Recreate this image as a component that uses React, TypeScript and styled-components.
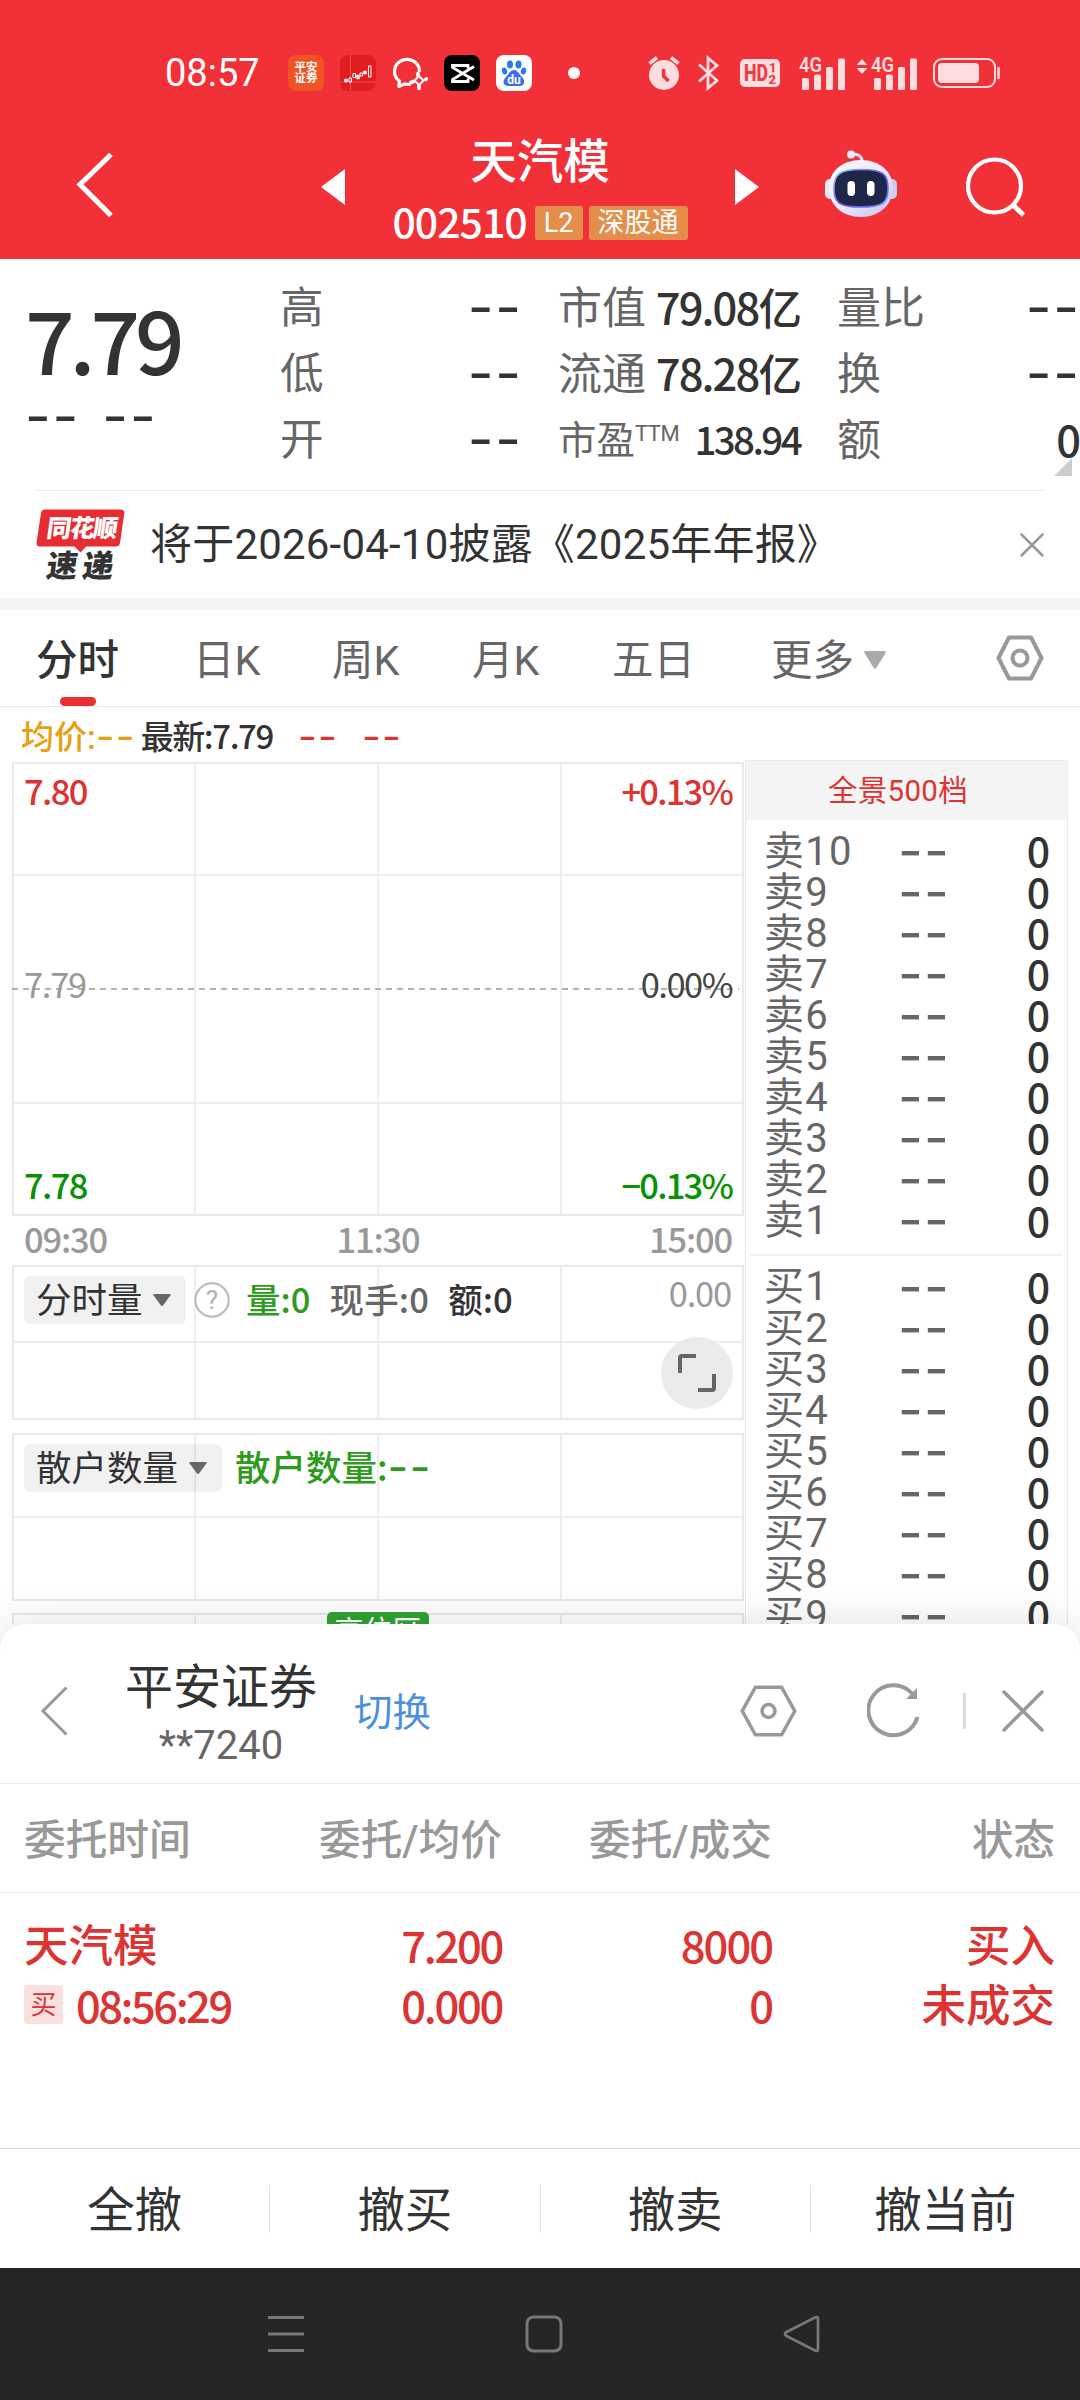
import React from "react";
import styled, { createGlobalStyle, css } from "styled-components";

const Global = createGlobalStyle`
  * { box-sizing: border-box; }
  html, body { margin: 0; padding: 0; background: #fff; }
  body { font-family: Roboto, "Noto Sans CJK SC", sans-serif; color: #333; }
  svg { display: block; flex: none; }
`;

const RED = "#dc3333";
const GREEN = "#0a9206";
const LINE = "#ebebeb";

/* ---------- shared text ---------- */

const Txt = styled.span<{ $size: number; $color?: string; $weight?: number; $ls?: number; $w?: number }>`
  font-size: ${(p) => p.$size}px;
  line-height: 1;
  color: ${(p) => p.$color ?? "inherit"};
  font-weight: ${(p) => p.$weight ?? 400};
  letter-spacing: ${(p) => p.$ls ?? 0}px;
  white-space: nowrap;
  ${(p) => p.$w && css`width: ${p.$w}px;`}
`;

/* narrow figures for prices, volumes and times */
const Num = styled(Txt)`
  font-family: "Noto Sans CJK SC", sans-serif;
  padding-bottom: 0.12em;
`;

const Dash = styled.span<{ $size: number; $ls: number; $color?: string; $weight?: number }>`
  font-family: Inter, sans-serif;
  font-size: ${(p) => p.$size}px;
  letter-spacing: ${(p) => p.$ls}px;
  margin-right: -${(p) => p.$ls}px;
  padding-bottom: 2px;
  color: ${(p) => p.$color ?? "#333"};
  font-weight: ${(p) => p.$weight ?? 400};
  line-height: 0.74;
  white-space: nowrap;
`;

/* ---------- page ---------- */

const Screen = styled.div`
  width: 1080px;
  height: 2400px;
  display: flex;
  flex-direction: column;
  overflow: hidden;
  background: #fff;
`;

const Header = styled.header`
  height: 259px;
  flex: none;
  background: #f23038;
  color: #fff;
  display: flex;
  flex-direction: column;
`;

const StatusBar = styled.div`
  height: 126px;
  padding: 19px 77px 0 165px;
  display: flex;
  align-items: center;
`;

const Clock = styled(Txt)`
  width: 123px;
  flex: none;
`;

const AppIcons = styled.div`
  display: flex;
  align-items: center;
  gap: 16px;
  width: 361px;
  flex: none;
`;

const AppTile = styled.div<{ $bg: string }>`
  width: 36px;
  height: 36px;
  border-radius: 8px;
  background: ${(p) => p.$bg};
  display: flex;
  flex-direction: column;
  align-items: center;
  justify-content: center;
  overflow: hidden;
  font-size: 11.5px;
  line-height: 11px;
  font-weight: 700;
`;

const Indicators = styled.div`
  display: flex;
  align-items: center;
  margin-left: -1px;
`;

const Gap = styled.i<{ $w: number }>`
  width: ${(p) => p.$w}px;
  flex: none;
`;

const TitleBar = styled.div`
  height: 133px;
  padding-left: 75px;
  display: flex;
`;

const BarIcon = styled.div<{ $w: number; $top: number; $ml?: number }>`
  width: ${(p) => p.$w}px;
  padding-top: ${(p) => p.$top}px;
  margin-left: ${(p) => p.$ml ?? 0}px;
  flex: none;
`;

const TitleBlock = styled.div`
  width: 390px;
  display: flex;
  flex-direction: column;
  align-items: center;
`;

const TitleName = styled(Txt)`
  line-height: 60px;
  margin-top: 6px;
`;

const CodeRow = styled.div`
  display: flex;
  align-items: center;
  height: 34px;
  margin-top: 14px;
`;

const Badge = styled.span<{ $w: number }>`
  width: ${(p) => p.$w}px;
  height: 34px;
  line-height: 35px;
  border-radius: 3px;
  background: #e58d4b;
  font-size: 27px;
  text-align: center;
  margin-left: 6px;
  white-space: nowrap;
`;

/* ---------- quote ---------- */

const Quote = styled.section`
  height: 231px;
  flex: none;
  padding-top: 17px;
  display: flex;
`;

const PriceCol = styled.div`
  width: 280px;
  padding-left: 25px;
  flex: none;
`;

const BigPrice = styled.div`
  font-family: "Noto Sans CJK SC", sans-serif;
  font-size: 87px;
  line-height: 104px;
  margin-top: 9px;
  height: 110px;
  font-weight: 500;
  letter-spacing: -5px;
`;

const ChangeRow = styled.div`
  display: flex;
  gap: 24px;
  height: 45px;
  align-items: center;
`;

const StatCol = styled.div<{ $w: number; $ml: number }>`
  width: ${(p) => p.$w}px;
  margin-left: ${(p) => p.$ml}px;
  flex: none;
`;

const StatRow = styled.div`
  height: 66px;
  display: flex;
  align-items: center;
  justify-content: space-between;
  color: #666;
`;

const Sup = styled.sup`
  font-size: 22px;
  line-height: 1;
  vertical-align: 13px;
  letter-spacing: -0.5px;
`;

const CornerWrap = styled.div`
  display: flex;
  justify-content: flex-end;
  margin-top: -16px;
  padding-right: 7px;
`;

const News = styled.section`
  height: 108px;
  flex: none;
  margin: 0 36px;
  border-top: 1px solid ${LINE};
  display: flex;
  align-items: center;
  justify-content: space-between;
`;

const NewsLeft = styled.div`
  display: flex;
  align-items: center;
  gap: 24px;
`;

const Band = styled.div`
  height: 12px;
  flex: none;
  background: #f4f4f4;
`;

/* ---------- tabs ---------- */

const Tabs = styled.nav`
  height: 97px;
  flex: none;
  border-bottom: 1px solid #e6e6e6;
  display: flex;
  padding-left: 36px;
  padding-right: 36px;
`;

const Tab = styled.div<{ $w: number; $active?: boolean }>`
  width: ${(p) => p.$w}px;
  height: 96px;
  flex: none;
  font-size: 41.5px;
  color: ${(p) => (p.$active ? "#333" : "#666")};
  font-weight: ${(p) => (p.$active ? 500 : 400)};
  display: flex;
  flex-direction: column;
`;

const TabLabel = styled.span`
  height: 87px;
  display: flex;
  align-items: center;
  line-height: 75px;
  padding-top: 13px;
  gap: 10px;
`;

const Underline = styled.i`
  width: 36px;
  height: 9px;
  margin-left: 24px;
  border-radius: 4.5px;
  background: #e93030;
`;

const TabEnd = styled.div`
  margin-left: auto;
  display: flex;
  align-items: center;
`;

/* ---------- chart area ---------- */

const Market = styled.main`
  height: 917px;
  flex: none;
  display: flex;
  overflow: hidden;
`;

const ChartCol = styled.div`
  width: 745px;
  padding-left: 12px;
  flex: none;
`;

const AvgLine = styled.div`
  height: 55px;
  padding-left: 9px;
  padding-top: 6px;
  display: flex;
  align-items: center;
`;

const Panel = styled.div<{ $h: number; $mb: number }>`
  position: relative;
  width: 732px;
  height: ${(p) => p.$h}px;
  margin-bottom: ${(p) => p.$mb}px;
`;

const Grid = styled.svg`
  position: absolute;
  inset: 0;
`;

const ScaleRows = styled.div`
  position: relative;
  height: 100%;
  padding: 12px 12px 11px 12px;
  display: flex;
  flex-direction: column;
  justify-content: space-between;
`;

const ScaleRow = styled.div<{ $color?: string; $lift?: number }>`
  display: flex;
  justify-content: space-between;
  align-items: center;
  height: 37px;
  margin-bottom: ${(p) => p.$lift ?? 0}px;
  color: ${(p) => p.$color ?? "#999"};
`;

const TimeRow = styled.div`
  height: 49px;
  padding: 0 13px 0 12px;
  display: flex;
  align-items: center;
  justify-content: space-between;
  color: #999;
`;

const IndicatorRow = styled.div`
  position: relative;
  display: flex;
  align-items: center;
  height: 48px;
  top: 11px;
  padding: 0 13px 0 12px;
`;

const CornerValue = styled(Num)`
  margin: -11px 0 0 auto;
`;

const Picker = styled.div<{ $w: number }>`
  width: ${(p) => p.$w}px;
  height: 48px;
  flex: none;
  border-radius: 6px;
  background: rgba(0, 0, 0, 0.055);
  display: flex;
  align-items: center;
  justify-content: space-between;
  padding: 4px 15px 0 12px;
`;

const PickerCaret = styled.span`
  margin-top: -4px;
`;

const Expand = styled.button`
  position: absolute;
  right: 11px;
  top: 72px;
  width: 72px;
  height: 72px;
  border: 0;
  padding: 0;
  border-radius: 50%;
  background: #ebebeb;
  display: flex;
  align-items: center;
  justify-content: center;
`;

const ZoneTag = styled.div`
  position: absolute;
  left: 315px;
  top: -1px;
  width: 102px;
  height: 40px;
  border-radius: 5px;
  background: #31a331;
  color: #fff;
  font-size: 29px;
  line-height: 40px;
  text-align: center;
`;

const BookCol = styled.div`
  width: 323px;
  margin-top: 53px;
  border: 1px solid ${LINE};
  border-bottom: 0;
  flex: none;
`;

const BookHead = styled.div`
  height: 59px;
  line-height: 61px;
  padding-right: 17px;
  background: #f4f4f4;
  text-align: center;
  color: #dc3333;
  font-size: 29.5px;
  letter-spacing: 0.3px;
`;

const BookRows = styled.div<{ $top: number }>`
  padding-top: ${(p) => p.$top}px;
`;

const BookRow = styled.div`
  height: 41.05px;
  display: flex;
  align-items: center;
  padding: 1px 17px 0 18px;
`;

const BookVol = styled(Num)`
  margin-left: auto;
`;

const BookSplit = styled.div`
  height: 2px;
  margin: 13px 5px 0 4px;
  background: #f0f0f0;
`;

/* ---------- order sheet ---------- */

const Sheet = styled.section`
  height: 644px;
  flex: none;
  position: relative;
  border-radius: 26px 26px 0 0;
  background: #fff;
  box-shadow: 0 0 44px rgba(0, 0, 0, 0.13);
  display: flex;
  flex-direction: column;
`;

const SheetHead = styled.div`
  height: 160px;
  border-bottom: 1px solid ${LINE};
  display: flex;
  align-items: center;
  padding: 14px 36px 0 40px;
`;

const Broker = styled.div`
  width: 190px;
  margin-left: 58px;
  margin-top: 11px;
  display: flex;
  flex-direction: column;
  align-items: center;
`;

const BrokerName = styled(Txt)`
  line-height: 60px;
`;

const BrokerNo = styled(Txt)`
  line-height: 56px;
`;

const Switch = styled(Txt)`
  padding-top: 6px;
`;

const SheetIcons = styled.div`
  margin-left: auto;
  display: flex;
  align-items: center;
`;

const Pipe = styled.i`
  width: 3px;
  height: 36px;
  background: #ddd;
  margin: 0 36px 0 42px;
`;

const OrderGrid = styled.div<{ $h: number }>`
  display: grid;
  grid-template-columns: 249px 229px 270px 283px;
  height: ${(p) => p.$h}px;
  flex: none;
  padding: 0 25px 0 24px;
  align-items: center;
`;

const Cell = styled.div<{ $right?: boolean }>`
  display: flex;
  align-items: center;
  justify-content: ${(p) => (p.$right ? "flex-end" : "flex-start")};
`;

const ColumnHeads = styled(OrderGrid)`
  padding-top: 6px;
  border-bottom: 1px solid ${LINE};
`;

const OrderBody = styled.div`
  padding-top: 24px;
`;

const BuyTag = styled.span`
  width: 39px;
  height: 39px;
  margin: -5px 13px 0 0;
  border-radius: 3px;
  background: #fbe0e0;
  color: #dc3333;
  font-size: 26px;
  line-height: 40px;
  text-align: center;
`;

const Actions = styled.div`
  margin-top: auto;
  height: 120px;
  border-top: 1px solid #dedede;
  display: flex;
  align-items: center;
`;

const Action = styled.div`
  flex: 1;
  height: 48px;
  line-height: 53px;
  text-align: center;
  font-size: 47.5px;
  & + & { border-left: 1px solid #e2e2e2; }
`;

const NavBar = styled.footer`
  height: 132px;
  flex: none;
  position: relative;
  background: #252525;
  display: flex;
  align-items: center;
  padding-left: 267px;
  gap: 220px;
`;

/* ---------- icons ---------- */

const HexIcon = ({ w, h, r, sw, round }: { w: number; h: number; r: number; sw: number; round: boolean }) => (
  <svg width={w} height={h} viewBox={`0 0 ${w} ${h}`} fill="none" stroke="#999" strokeWidth={sw} strokeLinejoin={round ? "round" : "miter"}>
    <path d={`M${w * 0.27} ${sw / 2 + 0.5}H${w * 0.73}L${w - sw / 2 - 0.5} ${h / 2}L${w * 0.73} ${h - sw / 2 - 0.5}H${w * 0.27}L${sw / 2 + 0.5} ${h / 2}Z`} />
    <circle cx={w / 2} cy={h / 2} r={r} />
  </svg>
);

const Caret = ({ w, h, color }: { w: number; h: number; color: string }) => (
  <svg width={w} height={h} viewBox="0 0 20 12" preserveAspectRatio="none">
    <path d="M1.5 0h17q2 0 .8 1.6l-8 9.6q-1.3 1.4-2.6 0l-8-9.6q-1.200-1.600.8-1.600z" fill={color} />
  </svg>
);

const Signal = () => (
  <svg width="46" height="34" viewBox="0 0 46 34" fill="#ffdcde">
    <rect x="3" y="22" width="7" height="12" rx="1.500" />
    <rect x="15" y="18.500" width="7" height="15.500" rx="1.500" />
    <rect x="27" y="11" width="7" height="23" rx="1.500" />
    <rect x="39" y="2.500" width="7" height="31.500" rx="1.500" />
    <text x="0" y="16" fontSize="21" fontWeight="600" fontFamily="Roboto, sans-serif" textLength="23" lengthAdjust="spacingAndGlyphs">4G</text>
  </svg>
);

const Robot = () => (
  <svg width="72" height="68" viewBox="0 0 72 68">
    <defs>
      <linearGradient id="shell" x1="0" y1="0" x2="1" y2="1">
        <stop offset="0" stopColor="#fff" />
        <stop offset=".55" stopColor="#e9e7fb" />
        <stop offset="1" stopColor="#c3c0ea" />
      </linearGradient>
      <linearGradient id="rim" x1="0" y1="0" x2="1" y2="1">
        <stop offset="0" stopColor="#7fd2ff" />
        <stop offset=".5" stopColor="#7b4be8" />
        <stop offset="1" stopColor="#5b8cf5" />
      </linearGradient>
    </defs>
    <path d="M26 4q11-1 11.500 9" fill="none" stroke="#e6e0f6" strokeWidth="3" />
    <circle cx="26" cy="4.500" r="4" fill="#ece8fa" />
    <rect x="0" y="29" width="12" height="20" rx="5" fill="#e9e8fb" />
    <rect x="60" y="29" width="12" height="20" rx="5" fill="#cfccf2" />
    <path d="M36 10C55 10 68 22 68 38S55 67 36 67 4 55 4 38 17 10 36 10Z" fill="url(#shell)" />
    <path d="M36 19.500c22 0 27 5 27 19s-5 18.500-27 18.500S9 52.500 9 38.500s5-19 27-19Z" fill="#1f2748" stroke="url(#rim)" strokeWidth="1.600" />
    <rect x="22.500" y="31" width="7.500" height="15" rx="3.700" fill="#fff" />
    <rect x="42" y="31" width="7.500" height="15" rx="3.700" fill="#fff" />
  </svg>
);

const NewsLogo = () => (
  <svg width="90" height="74" viewBox="0 0 90 74">
    <path d="M9 1.500H84q5 0 4.300 4L84 35q-.6 3.500-4 3.500H50l-5.500 6-6-6H4q-4 0-3.400-4L5 5q.6-3.500 4-3.500Z" fill="#e62e32" />
    <g fontFamily='"Noto Sans CJK SC", sans-serif' fontWeight="900" transform="skewX(-8)">
      <text x="14" y="29.500" fontSize="24.500" fill="#fff" textLength="71" lengthAdjust="spacing">同花顺</text>
      <text x="19" y="69.500" fontSize="31" fill="#333" textLength="67" lengthAdjust="spacing">速递</text>
    </g>
  </svg>
);

const GridLines = ({ h, rows, dashed }: { h: number; rows: number[]; dashed?: number }) => (
  <Grid width="732" height={h} viewBox={`0 0 732 ${h}`} stroke="#e9e9e9" strokeWidth="2" fill="none">
    <rect x="1" y="1" width="730" height={h - 2} />
    {[183, 366, 549].map((x) => (
      <path key={x} d={`M${x} 0V${h}`} strokeWidth="1.500" />
    ))}
    {rows.map((y) => (
      <path key={y} d={`M0 ${y}H732`} strokeWidth="1.500" />
    ))}
    {dashed && <path d={`M0 ${dashed}H727`} stroke="#999" strokeWidth="1.500" strokeDasharray="6 5" />}
  </Grid>
);

/* ---------- data ---------- */

const sells = [10, 9, 8, 7, 6, 5, 4, 3, 2, 1];
const buys = [1, 2, 3, 4, 5, 6, 7, 8, 9];

const BookLine = ({ label }: { label: string }) => (
  <BookRow>
    <Txt $size={40} $color="#666" $w={134} $ls={1.3}>{label}</Txt>
    <Dash $size={54} $ls={1.2} $color="#666">--</Dash>
    <BookVol $size={41} $weight={500}>0</BookVol>
  </BookRow>
);

const StatDash = () => <Dash $size={56} $ls={1.8}>--</Dash>;

export default function App() {
  return (
    <Screen>
      <Global />
      <Header>
        <StatusBar>
          <Clock $size={38}>08:57</Clock>
          <AppIcons>
            <AppTile $bg="#f05423"><span>平安</span><span>证券</span></AppTile>
            <AppTile $bg="#e01d20">
              <svg width="36" height="36" viewBox="0 0 36 36" fill="none" stroke="#fff" strokeWidth="1.300">
                <path d="M10.500 0V36M0 27H36" stroke="#f25a5a" strokeWidth=".8" />
                <path d="M4.500 24h3v3h-3zM16.500 20h3v4h-3zM23.500 16h3v3h-3z" fill="#fff" strokeWidth=".5" />
                <path d="M9 23h2.500v4H9zM13 18.500h2.500v4H13zM20 18h2.500v3H20zM28.500 11h2.500v11h-2.500z" strokeWidth="1" />
              </svg>
            </AppTile>
            <svg width="36" height="36" viewBox="0 0 36 36" fill="none" stroke="#fff" strokeWidth="3.200">
              <path d="M27.500 17A12.500 12 0 1 0 7.500 26l-.6 5.500 5.600-2.600q3 .9 6 .4" strokeLinejoin="round" />
              <path d="M27 21l4.500 4.500L27 30l-4.500-4.500z" strokeWidth="2" />
              <path d="M26 18.500v2M33.500 24.500l1-.5M27 31v2.500M19 27.500l2.500-1" strokeWidth="3.600" strokeLinecap="round" />
            </svg>
            <AppTile $bg="#000">
              <svg width="36" height="36" viewBox="0 0 36 36" fill="none" stroke="#fff" strokeWidth="2.800">
                <path d="M30 11.500L8.500 24.500V26.500H24V23.500M30 25L8.500 12.500V10.500H24V13.500" />
              </svg>
            </AppTile>
            <AppTile $bg="#fff">
              <svg width="36" height="36" viewBox="0 0 36 36" fill="#2a79f0">
                <ellipse cx="14" cy="9.500" rx="3" ry="4" />
                <ellipse cx="22.500" cy="9.500" rx="3" ry="4" />
                <ellipse cx="8.500" cy="16" rx="2.600" ry="3.600" transform="rotate(-15 8.500 16)" />
                <ellipse cx="27.500" cy="16" rx="2.600" ry="3.600" transform="rotate(15 27.500 16)" />
                <path d="M18 15c4 0 5 4 8 7 4 4 2 9-2 9H12c-5 0-6-5-2-9 3-3 4-7 8-7Z" fill="#3c6df3" />
                <text x="18" y="29" fontSize="12" fontWeight="700" fill="#fff" textAnchor="middle" fontFamily="Roboto, sans-serif">du</text>
              </svg>
            </AppTile>
            <svg width="48" height="12" viewBox="0 0 48 12"><circle cx="26" cy="6" r="6" fill="#fff" /></svg>
          </AppIcons>
          <Indicators>
            <svg width="32" height="36" viewBox="0 0 32 36">
              <circle cx="16" cy="20" r="15" fill="#ffdcde" />
              <path d="M1.500 8.500L9 2.500M30.500 8.500L23 2.500" stroke="#ffdcde" strokeWidth="3.600" />
              <path d="M15.500 14v7l5 5" stroke="#f23038" strokeWidth="3.500" fill="none" />
            </svg>
            <Gap $w={18} />
            <svg width="21" height="36" viewBox="0 0 21 36" fill="none" stroke="#ffdcde" strokeWidth="2.800">
              <path d="M1 9.500L19 25.500L10 33V3L19 10.500L1 26.500" />
            </svg>
            <Gap $w={21} />
            <svg width="40" height="30" viewBox="0 0 40 30">
              <rect y="1" width="40" height="28" rx="5" fill="#ffdcde" />
              <g fontFamily="Roboto, sans-serif" fontWeight="800" fill="#ee3a44">
                <text x="4" y="23" fontSize="23" textLength="24" lengthAdjust="spacingAndGlyphs">HD</text>
                <text x="29" y="14" fontSize="13">1</text>
                <text x="28.500" y="26" fontSize="13">2</text>
              </g>
            </svg>
            <Gap $w={19} />
            <Signal />
            <Gap $w={12} />
            <svg width="14" height="34" viewBox="0 0 14 34" fill="#ffdcde">
              <path d="M5 3l5.500 6H-.5zM5 18l5.500-6H-.5z" />
            </svg>
            <Signal />
            <Gap $w={16} />
            <svg width="68" height="30" viewBox="0 0 68 30" fill="none">
              <rect x="1" y="1" width="61" height="28" rx="8" stroke="#ffdcde" strokeWidth="2" />
              <rect x="5" y="5" width="41" height="20" rx="4" fill="#ffdcde" />
              <path d="M65.500 10v10" stroke="#ffdcde" strokeWidth="2.500" strokeLinecap="round" />
            </svg>
          </Indicators>
        </StatusBar>
        <TitleBar>
          <BarIcon $w={246} $top={26}>
            <svg width="38" height="66" viewBox="0 0 38 66" fill="none" stroke="#fff" strokeWidth="5">
              <path d="M36 2.500L5 32.500L36 63.500" />
            </svg>
          </BarIcon>
          <BarIcon $w={24} $top={43}>
            <svg width="24" height="36" viewBox="0 0 24 36"><path d="M24 0V36L0 18Z" fill="#fff" /></svg>
          </BarIcon>
          <TitleBlock>
            <TitleName $size={46.5} $weight={500}>天汽模</TitleName>
            <CodeRow>
              <Num $size={41} $weight={500} $ls={-1} $w={136}>002510</Num>
              <Badge $w={48}>L2</Badge>
              <Badge $w={99}>深股通</Badge>
            </CodeRow>
          </TitleBlock>
          <BarIcon $w={24} $top={43}>
            <svg width="24" height="36" viewBox="0 0 24 36"><path d="M0 0V36L24 18Z" fill="#fff" /></svg>
          </BarIcon>
          <BarIcon $w={72} $top={24} $ml={66}><Robot /></BarIcon>
          <BarIcon $w={62} $top={30} $ml={69}>
            <svg width="62" height="62" viewBox="0 0 62 62" fill="none" stroke="#fff" strokeWidth="4.200">
              <circle cx="28.500" cy="30" r="26.500" />
              <path d="M46.500 48.500L57.500 59" strokeWidth="5" />
            </svg>
          </BarIcon>
        </TitleBar>
      </Header>

      <Quote>
        <PriceCol>
          <BigPrice>7.79</BigPrice>
          <ChangeRow>
            <StatDash />
            <StatDash />
          </ChangeRow>
        </PriceCol>
        <StatCol $w={241} $ml={0}>
          {["高", "低", "开"].map((t) => (
            <StatRow key={t}>
              <Txt $size={43.5}>{t}</Txt>
              <StatDash />
            </StatRow>
          ))}
        </StatCol>
        <StatCol $w={242} $ml={37}>
          <StatRow>
            <Txt $size={44}>市值</Txt>
            <Num $size={43.5} $weight={500} $color="#333" $ls={-1.9}>79.08亿</Num>
          </StatRow>
          <StatRow>
            <Txt $size={44}>流通</Txt>
            <Num $size={43.5} $weight={500} $color="#333" $ls={-1.9}>78.28亿</Num>
          </StatRow>
          <StatRow>
            <Txt $size={38.5}>市盈<Sup>TTM</Sup></Txt>
            <Num $size={38.5} $weight={500} $color="#333" $ls={-2.6}>138.94</Num>
          </StatRow>
        </StatCol>
        <StatCol $w={242} $ml={37}>
          <StatRow>
            <Txt $size={44}>量比</Txt>
            <StatDash />
          </StatRow>
          <StatRow>
            <Txt $size={44}>换</Txt>
            <StatDash />
          </StatRow>
          <StatRow>
            <Txt $size={44}>额</Txt>
            <Num $size={43.5} $weight={500} $color="#333" $ls={-2}>0</Num>
          </StatRow>
          <CornerWrap>
            <svg width="18" height="18" viewBox="0 0 18 18"><path d="M18 0V18H0Z" fill="#ccc" /></svg>
          </CornerWrap>
        </StatCol>
      </Quote>

      <News>
        <NewsLeft>
          <NewsLogo />
          <Txt $size={42} $ls={0.2}>将于2026-04-10披露《2025年年报》</Txt>
        </NewsLeft>
        <svg width="24" height="24" viewBox="0 0 24 24" stroke="#999" strokeWidth="2.500" strokeLinecap="round">
          <path d="M1.500 1.500L22.500 22.500M22.500 1.500L1.500 22.500" />
        </svg>
      </News>
      <Band />

      <Tabs>
        <Tab $w={157} $active><TabLabel>分时</TabLabel><Underline /></Tab>
        <Tab $w={139}><TabLabel>日K</TabLabel></Tab>
        <Tab $w={140}><TabLabel>周K</TabLabel></Tab>
        <Tab $w={140}><TabLabel>月K</TabLabel></Tab>
        <Tab $w={159}><TabLabel>五日</TabLabel></Tab>
        <Tab $w={120}><TabLabel>更多<Caret w={22} h={18} color="#aaa" /></TabLabel></Tab>
        <TabEnd><HexIcon w={48} h={46} r={7.5} sw={4} round /></TabEnd>
      </Tabs>

      <Market>
        <ChartCol>
          <AvgLine>
            <Txt $size={33} $color="#e6a010" $weight={500}>均价:</Txt>
            <Dash $size={41} $ls={1.2} $color="#e6a010">--</Dash>
            <Gap $w={6} />
            <Num $size={33} $weight={500} $ls={-1.4}>最新:7.79</Num>
            <Gap $w={25} />
            <Dash $size={41} $ls={1.2} $color={RED}>--</Dash>
            <Gap $w={25} />
            <Dash $size={41} $ls={1.2} $color={RED}>--</Dash>
          </AvgLine>
          <Panel $h={454} $mb={0}>
            <GridLines h={454} rows={[113, 341]} dashed={227} />
            <ScaleRows>
              <ScaleRow $color={RED}>
                <Num $size={34.5} $weight={500} $ls={-1.6}>7.80</Num>
                <Num $size={34.5} $weight={500} $ls={-1.8}>+0.13%</Num>
              </ScaleRow>
              <ScaleRow $lift={8}>
                <Num $size={34.5} $ls={-1.3}>7.79</Num>
                <Num $size={34.5} $ls={-1.5} $color="#444">0.00%</Num>
              </ScaleRow>
              <ScaleRow $color={GREEN}>
                <Num $size={34.5} $weight={500} $ls={-1.6}>7.78</Num>
                <Num $size={34.5} $weight={500} $ls={-1.8}>−0.13%</Num>
              </ScaleRow>
            </ScaleRows>
          </Panel>
          <TimeRow>
            <Num $size={34.5} $weight={500} $ls={-1.2}>09:30</Num>
            <Num $size={34.5} $weight={500} $ls={-1.2}>11:30</Num>
            <Num $size={34.5} $weight={500} $ls={-1.2}>15:00</Num>
          </TimeRow>
          <Panel $h={155} $mb={13}>
            <GridLines h={155} rows={[77]} />
            <IndicatorRow>
              <Picker $w={162}>
                <Txt $size={35.5}>分时量</Txt>
                <PickerCaret><Caret w={18} h={12} color="#666" /></PickerCaret>
              </Picker>
              <Gap $w={8} />
              <svg width="36" height="36" viewBox="0 0 36 36">
                <circle cx="18" cy="18" r="16.700" fill="none" stroke="#b8b8b8" strokeWidth="2" />
                <text x="18" y="27" fontSize="26" fill="#b0b0b0" textAnchor="middle" fontFamily="Roboto, sans-serif">?</text>
              </svg>
              <Gap $w={16} />
              <Num $size={34.5} $weight={500} $color="#2f9a20" $ls={0}>量:0</Num>
              <Gap $w={19} />
              <Num $size={34.5} $weight={500} $color="#666" $ls={0.2}>现手:0</Num>
              <Gap $w={19} />
              <Num $size={34.5} $weight={500} $ls={0}>额:0</Num>
              <CornerValue $size={34.5} $color="#999" $ls={-1.2}>0.00</CornerValue>
            </IndicatorRow>
            <Expand>
              <svg width="38" height="38" viewBox="0 0 38 38" fill="none" stroke="#666" strokeWidth="4">
                <path d="M2 19V4q0-2 2-2H18M36 20V34q0 2-2 2H20" />
              </svg>
            </Expand>
          </Panel>
          <Panel $h={168} $mb={12}>
            <GridLines h={168} rows={[84]} />
            <IndicatorRow>
              <Picker $w={198}>
                <Txt $size={35.5}>散户数量</Txt>
                <PickerCaret><Caret w={18} h={12} color="#666" /></PickerCaret>
              </Picker>
              <Gap $w={13} />
              <Num $size={35.5} $weight={500} $color="#2f9a20">散户数量:</Num>
              <Dash $size={45} $ls={1.5} $color="#2f9a20">--</Dash>
            </IndicatorRow>
          </Panel>
          <Panel $h={155} $mb={0}>
            <GridLines h={155} rows={[]} />
            <ZoneTag>高位区</ZoneTag>
          </Panel>
        </ChartCol>
        <BookCol>
          <BookHead>全景500档</BookHead>
          <BookRows $top={11}>
            {sells.map((n) => <BookLine key={n} label={`卖${n}`} />)}
          </BookRows>
          <BookSplit />
          <BookRows $top={10}>
            {buys.map((n) => <BookLine key={n} label={`买${n}`} />)}
          </BookRows>
        </BookCol>
      </Market>

      <Sheet>
        <SheetHead>
          <svg width="28" height="50" viewBox="0 0 28 50" fill="none" stroke="#999" strokeWidth="3">
            <path d="M26.500 1.500L3 25L26.500 48.500" />
          </svg>
          <Broker>
            <BrokerName $size={48}>平安证券</BrokerName>
            <BrokerNo $size={40} $color="#666">**7240</BrokerNo>
          </Broker>
          <Gap $w={38} />
          <Switch $size={38.5} $color="#4a90e2">切换</Switch>
          <SheetIcons>
            <HexIcon w={57} h={52} r={6.5} sw={3.5} round={false} />
            <Gap $w={70} />
            <svg width="54" height="56" viewBox="0 0 54 56" fill="none" stroke="#999" strokeWidth="4">
              <path d="M50.500 34A25 25 0 1 1 45 10.500" />
              <path d="M50 5V16H39Z" fill="#999" stroke="none" />
            </svg>
            <Pipe />
            <svg width="42" height="42" viewBox="0 0 42 42" stroke="#999" strokeWidth="3.500" strokeLinecap="round">
              <path d="M2 2L40 40M40 2L2 40" />
            </svg>
          </SheetIcons>
        </SheetHead>
        <ColumnHeads $h={109}>
          <Cell><Txt $size={41.7} $weight={500} $color="#999">委托时间</Txt></Cell>
          <Cell $right><Txt $size={41.7} $weight={500} $color="#999">委托/均价</Txt></Cell>
          <Cell $right><Txt $size={41.7} $weight={500} $color="#999">委托/成交</Txt></Cell>
          <Cell $right><Txt $size={41.7} $weight={500} $color="#999">状态</Txt></Cell>
        </ColumnHeads>
        <OrderBody>
          <OrderGrid $h={60}>
            <Cell><Txt $size={44.5} $weight={500} $color={RED}>天汽模</Txt></Cell>
            <Cell $right><Num $size={43.5} $weight={500} $color={RED} $ls={-2.3}>7.200</Num></Cell>
            <Cell $right><Num $size={43.5} $weight={500} $color={RED} $ls={-2}>8000</Num></Cell>
            <Cell $right><Txt $size={44.5} $weight={500} $color={RED}>买入</Txt></Cell>
          </OrderGrid>
          <OrderGrid $h={60}>
            <Cell>
              <BuyTag>买</BuyTag>
              <Num $size={43.5} $weight={500} $color={RED} $ls={-2.5}>08:56:29</Num>
            </Cell>
            <Cell $right><Num $size={43.5} $weight={500} $color={RED} $ls={-2.3}>0.000</Num></Cell>
            <Cell $right><Num $size={43.5} $weight={500} $color={RED} $ls={-2}>0</Num></Cell>
            <Cell $right><Txt $size={44.5} $weight={500} $color={RED}>未成交</Txt></Cell>
          </OrderGrid>
        </OrderBody>
        <Actions>
          {["全撤", "撤买", "撤卖", "撤当前"].map((t) => <Action key={t}>{t}</Action>)}
        </Actions>
      </Sheet>

      <NavBar>
        <svg width="38" height="38" viewBox="0 0 38 38" stroke="#777" strokeWidth="3">
          <path d="M1 2.500H37M1 19H37M1 35.500H37" />
        </svg>
        <svg width="38" height="38" viewBox="0 0 38 38" fill="none" stroke="#777" strokeWidth="3">
          <rect x="2" y="2" width="34" height="34" rx="6.500" />
        </svg>
        <svg width="38" height="38" viewBox="0 0 38 38" fill="none" stroke="#777" strokeWidth="2.800" strokeLinejoin="round">
          <path d="M32 2.500Q35 1 35 4.500V33.500Q35 37 32 35.500L3.500 21Q.5 19 3.500 17Z" />
        </svg>
      </NavBar>
    </Screen>
  );
}
